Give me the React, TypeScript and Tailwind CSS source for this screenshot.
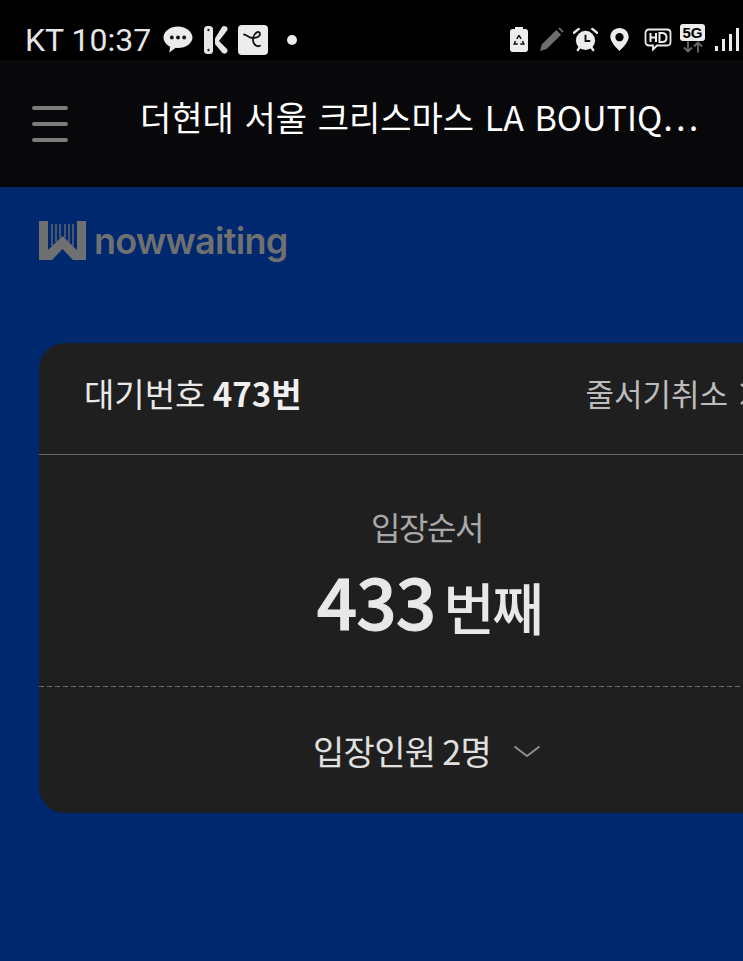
const font = { fontFamily: '"Noto Sans CJK KR", "Noto Sans", sans-serif' };

function StatusLeftIcons() {
  return (
    <div className="flex items-center">
      {/* talk bubble */}
      <svg width="30" height="29" viewBox="0 0 30 28" className="ml-[12px]">
        <path d="M15 1C7.300 1 .5 5.800 .5 12c0 3.900 2.700 7.300 6.700 9.200L6.200 27l6.600-4.700c.7.1 1.500.2 2.200.2 7.700 0 14.500-4.800 14.500-10.500S22.700 1 15 1z" fill="#ececec" />
        <circle cx="8.800" cy="12" r="1.900" fill="#111" />
        <circle cx="15" cy="12" r="1.900" fill="#111" />
        <circle cx="21.200" cy="12" r="1.900" fill="#111" />
      </svg>
      {/* K app */}
      <svg width="24" height="28" viewBox="0 0 24 28" className="ml-[11px]">
        <rect x="0" y="0" width="9" height="28" rx="3.500" fill="#e6e6e6" />
        <circle cx="4.500" cy="4" r="1.200" fill="#222" />
        <circle cx="4.500" cy="24" r="1.200" fill="#222" />
        <path d="M11 12.500L18 1c1-1.200 3-1.300 4.500-.2 1.200 1 1.400 2.600.6 3.700L15 15l8 8c.9 1.300.6 3-.7 4-1.400 1-3.200.9-4.300-.4L11 18z" fill="#e6e6e6" />
      </svg>
      {/* e app */}
      <div className="ml-[10px] flex h-[30px] w-[30px] items-center justify-center rounded-[4px] bg-[#ececec]">
        <svg width="22" height="20" viewBox="0 0 22 20">
          <path d="M2 4.500c2.500 0 5 3.500 9 3.500 3.500 0 7-1.500 7-3.800C18 2 16 1.500 14.500 2.500 11 5 10 10 12 13.500c1.500 2.500 4 3.200 6 2.200" fill="none" stroke="#111" strokeWidth="1.800" strokeLinecap="round" />
        </svg>
      </div>
      <div className="ml-[19px] h-[10px] w-[10px] rounded-full bg-[#ececec]" />
    </div>
  );
}

function StatusRightIcons() {
  return (
    <div className="flex items-center">
      {/* battery saver */}
      <svg width="18" height="25" viewBox="0 0 18 25">
        <path d="M5 0h8v2h2.500C17 2 18 3.200 18 4.700v17.600c0 1.500-1 2.700-2.500 2.700h-13C1 25 0 23.800 0 22.300V4.700C0 3.200 1 2 2.500 2H5z" fill="#ececec" />
        <path d="M9 8.500l-2.200 3.300M9 8.500l2.200 3.300M5.500 14l-1.300 3h3.600M12.500 14l1.300 3h-3.600" fill="none" stroke="#111" strokeWidth="1.500" />
      </svg>
      {/* pen */}
      <svg width="25" height="25" viewBox="0 0 26 26" className="ml-[11px]">
        <path d="M1 25l2-7L18 3l5 5L8 23z" fill="#6e6e6e" />
        <path d="M20 1.500l1.500-1 4 4-1 1.500z" fill="#6e6e6e" />
      </svg>
      {/* alarm */}
      <svg width="25" height="25" viewBox="0 0 26 26" className="ml-[9px]">
        <circle cx="13" cy="14" r="10" fill="#ececec" />
        <path d="M13 8v6.500h5" fill="none" stroke="#111" strokeWidth="2" />
        <path d="M1 6l5-4M25 6l-5-4" stroke="#ececec" strokeWidth="2.500" strokeLinecap="round" />
        <path d="M5 24l2-3M21 24l-2-3" stroke="#ececec" strokeWidth="2.500" strokeLinecap="round" />
      </svg>
      {/* location pin */}
      <svg width="19" height="23" viewBox="0 0 20 25" className="ml-[12px]">
        <path fillRule="evenodd" d="M10 0C4.500 0 0 4.300 0 9.800 0 16 10 25 10 25s10-9 10-15.200C20 4.300 15.500 0 10 0zm0 5.500a4.500 4.500 0 110 9 4.500 4.500 0 010-9z" fill="#ececec" />
      </svg>
      {/* HD voice */}
      <svg width="28" height="24" viewBox="0 0 28 24" className="ml-[15px]">
        <path d="M5 1.500h18c2 0 3.500 1.500 3.500 3.500v9c0 2-1.500 3.500-3.500 3.500H13l-4 4v-4H5c-2 0-3.500-1.500-3.500-3.500V5C1.500 3 3 1.500 5 1.500z" fill="none" stroke="#ececec" strokeWidth="1.800" />
        <path d="M6.500 5v9M12 5v9M6.500 9.500H12" stroke="#ececec" strokeWidth="2" fill="none" />
        <path d="M15.500 5v9h2.500c2.500 0 4.500-1.500 4.500-4.500S20.500 5 18 5z" stroke="#ececec" strokeWidth="2" fill="none" />
      </svg>
      {/* 5G with arrows */}
      <div className="ml-[8px] mt-[-3px] flex flex-col items-center">
        <div className="flex h-[17px] w-[25px] items-center justify-center rounded-[3px] bg-[#ececec] text-[15px] leading-none font-bold text-black" style={{ fontFamily: '"Liberation Sans", sans-serif' }}>
          5G
        </div>
        <svg width="24" height="12" viewBox="0 0 24 11">
          <path d="M7 0v10M3 6l4 4 4-4" stroke="#6a6a6a" strokeWidth="1.800" fill="none" />
          <path d="M17 11V1M13 5l4-4 4 4" stroke="#6a6a6a" strokeWidth="1.800" fill="none" />
        </svg>
      </div>
      {/* signal */}
      <div className="ml-[10px] flex h-[23px] items-end gap-[4px]">
        <div className="h-[5px] w-[3px] bg-[#ececec]" />
        <div className="h-[12px] w-[3px] bg-[#ececec]" />
        <div className="h-[17px] w-[3px] bg-[#ececec]" />
        <div className="h-[23px] w-[3px] bg-[#ececec]" />
      </div>
    </div>
  );
}

function Logo() {
  return (
    <div className="flex items-center">
      <svg width="47" height="39" viewBox="0 0 47 39">
        <path d="M0 0H9V29L23.500 15 38 29V0H47V39H34L23.500 28 13 39H0Z" fill="#6f7070" />
        <path d="M13 3V25M17 3V21M21 3V17M26 3V17M30 3V21M34 3V25" stroke="#6f7070" strokeWidth="1.300" />
      </svg>
      <span className="ml-[8px] text-[36px] leading-none font-semibold tracking-[-0.7px] text-[#6f7070]" style={{ fontFamily: '"Inter", sans-serif' }}>
        nowwaiting
      </span>
    </div>
  );
}

export default function App() {
  return (
    <div className="h-[961px] w-[743px] overflow-hidden bg-[#00286e]" style={font}>
      {/* Status bar */}
      <div className="flex h-[60px] items-center justify-between bg-black pl-[25px] pt-[19px] pr-[4px]">
        <div className="flex items-center">
          <span className="text-[32px] leading-none text-[#e6e6e6]" style={{ fontFamily: '"Roboto", sans-serif' }}>
            KT 10:37
          </span>
          <StatusLeftIcons />
        </div>
        <StatusRightIcons />
      </div>

      {/* Header */}
      <div className="flex h-[127px] items-center bg-[#08080a]">
        <div className="ml-[32px] flex w-[36px] flex-col gap-[12px]">
          <div className="h-[4px] rounded-full bg-[#7b7b7b]" />
          <div className="h-[4px] rounded-full bg-[#7b7b7b]" />
          <div className="h-[4px] rounded-full bg-[#7b7b7b]" />
        </div>
        <div className="ml-[72px] mb-[13px] whitespace-nowrap text-[34px] leading-none text-white [word-spacing:3px]">
          더현대 서울 크리스마스 LA BOUTIQ⋯
        </div>
      </div>

      {/* Body */}
      <div className="pl-[39px]">
        <div className="pt-[34px]">
          <Logo />
        </div>

        <div className="mt-[83px] w-[776px] rounded-[26px] bg-[#1f1f1f]">
          <div className="flex h-[112px] items-center justify-between border-b border-[#6a6a6a] pr-[63px] pb-[10px] pl-[45px]">
            <div className="text-[33px] text-[#e8e8e8]">
              대기번호 <span className="font-bold text-[#f0f0f0]">473번</span>
            </div>
            <div className="flex items-center">
              <span className="whitespace-nowrap text-[31px] text-[#bcbcbc]">줄서기취소</span>
              <svg width="12" height="22" viewBox="0 0 12 22" className="ml-[12px]">
                <path d="M1 1l10 10L1 21" fill="none" stroke="#bcbcbc" strokeWidth="2" />
              </svg>
            </div>
          </div>

          <div className="flex h-[231px] flex-col items-center">
            <div className="mt-[55px] text-[32px] leading-none tracking-[-1.5px] text-[#a8a8a8]">입장순서</div>
            <div className="mt-[22px] ml-[4px] flex items-baseline text-[#e8e8e8]">
              <span className="text-[71px] leading-none font-medium tracking-[-1px] [-webkit-text-stroke:1px_#e8e8e8]">433</span>
              <span className="ml-[8px] text-[56px] leading-none font-medium tracking-[-2.5px]">번째</span>
            </div>
          </div>

          {/* dashed divider */}
          <div className="h-px bg-[repeating-linear-gradient(90deg,#6a6a6a_0_5px,transparent_5px_8px)]" />

          <div className="flex h-[126px] items-center justify-center">
            <span className="text-[34px] tracking-[-0.7px] text-[#e0e0e0]">입장인원 2명</span>
            <svg width="28" height="14" viewBox="0 0 28 14" className="ml-[22px] mt-[4px]">
              <path d="M1.500 1.500L14 11 26.500 1.500" fill="none" stroke="#8e8e8e" strokeWidth="2" />
            </svg>
          </div>
        </div>
      </div>
    </div>
  );
}
